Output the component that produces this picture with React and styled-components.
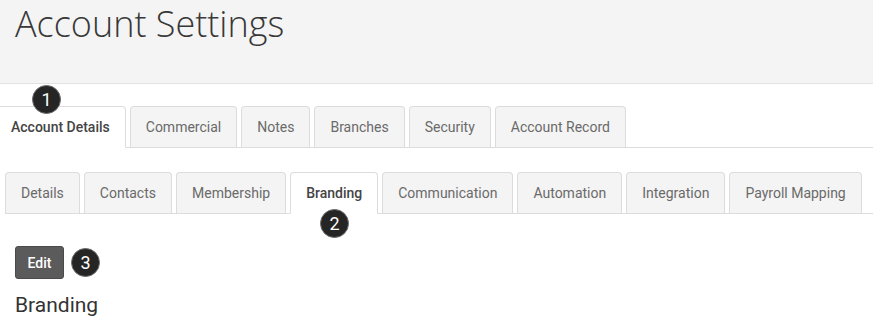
import React from 'react';
import styled, { createGlobalStyle } from 'styled-components';

const GlobalStyle = createGlobalStyle`
  html, body {
    margin: 0;
    padding: 0;
    background: #ffffff;
    overflow: hidden;
  }
  body {
    font-family: Roboto, "Liberation Sans", Arial, sans-serif;
    color: #555;
  }
`;

const Page = styled.div`
  width: 873px;
  height: 320px;
  overflow: hidden;
`;

const Header = styled.header`
  height: 83px;
  background-color: #f4f4f4;
  border-bottom: 1px solid #e2e2e2;
  padding: 0 15px;
  box-sizing: content-box;
`;

const Title = styled.h1`
  margin: 0;
  padding: 0;
  font-family: "Open Sans", "Liberation Sans", sans-serif;
  font-weight: 300;
  font-size: 36px;
  line-height: 48px;
  color: #383838;
  letter-spacing: 0;
`;

const TabList = styled.ul`
  display: flex;
  gap: 4px;
  list-style: none;
  margin: ${props => props.margin};
  padding: 0;
  border-bottom: 1px solid #dcdcdc;
`;

const Tab = styled.li`
  position: relative;
  height: ${props => (props.active ? '42px' : '41px')};
  margin-bottom: ${props => (props.active ? '-1px' : '0')};
  padding: 0 15px 1px;
  box-sizing: border-box;
  display: flex;
  align-items: center;
  border: 1px solid #dcdcdc;
  border-bottom: ${props => (props.active ? '1px solid #fff' : 'none')};
  border-radius: 4px 4px 0 0;
  background-color: ${props => (props.active ? '#ffffff' : '#f4f4f4')};
  color: ${props => (props.active ? '#444' : '#6a6a6a')};
  font-size: 14px;
  font-weight: ${props => (props.active ? 500 : 400)};
  white-space: nowrap;
`;

const Badge = styled.span`
  width: 29px;
  height: 29px;
  border-radius: 50%;
  background-color: #252525;
  border: 1px solid #6d6d6d;
  box-sizing: border-box;
  color: #fff;
  font-family: Roboto, "Liberation Sans", sans-serif;
  font-size: 18px;
  font-weight: 400;
  display: inline-flex;
  align-items: center;
  justify-content: center;
  flex: none;
`;

const FloatingBadge = styled(Badge)`
  position: absolute;
  left: ${props => props.left};
  top: ${props => props.top};
`;

const Toolbar = styled.div`
  display: flex;
  align-items: center;
  gap: 7px;
  margin: 32px 0 0 15px;
`;

const EditButton = styled.button`
  width: 49px;
  height: 33px;
  border: 1px solid #4a4a4a;
  border-radius: 3px;
  background-color: #5b5b5b;
  color: #fff;
  font-family: Roboto, "Liberation Sans", sans-serif;
  font-size: 14px;
  font-weight: 500;
  padding: 0;
  cursor: pointer;
`;

const SectionTitle = styled.h2`
  margin: 12px 0 0 15px;
  font-size: 21px;
  font-weight: 400;
  line-height: 28px;
  color: #333;
`;

const topTabs = ['Account Details', 'Commercial', 'Notes', 'Branches', 'Security', 'Account Record'];
const subTabs = ['Details', 'Contacts', 'Membership', 'Branding', 'Communication', 'Automation', 'Integration', 'Payroll Mapping'];

const App = () => (
  <Page>
    <GlobalStyle />
    <Header>
      <Title>Account Settings</Title>
    </Header>

    <TabList margin="22px 0 0 -5px">
      {topTabs.map(t => (
        <Tab key={t} active={t === 'Account Details'}>
          {t}
          {t === 'Account Details' && <FloatingBadge left="36px" top="-22px">1</FloatingBadge>}
        </Tab>
      ))}
    </TabList>

    <TabList margin="24px 0 0 5px">
      {subTabs.map(t => (
        <Tab key={t} active={t === 'Branding'}>
          {t}
          {t === 'Branding' && <FloatingBadge left="29px" top="36px">2</FloatingBadge>}
        </Tab>
      ))}
    </TabList>

    <Toolbar>
      <EditButton>Edit</EditButton>
      <Badge>3</Badge>
    </Toolbar>

    <SectionTitle>Branding</SectionTitle>
  </Page>
);

export default App;
